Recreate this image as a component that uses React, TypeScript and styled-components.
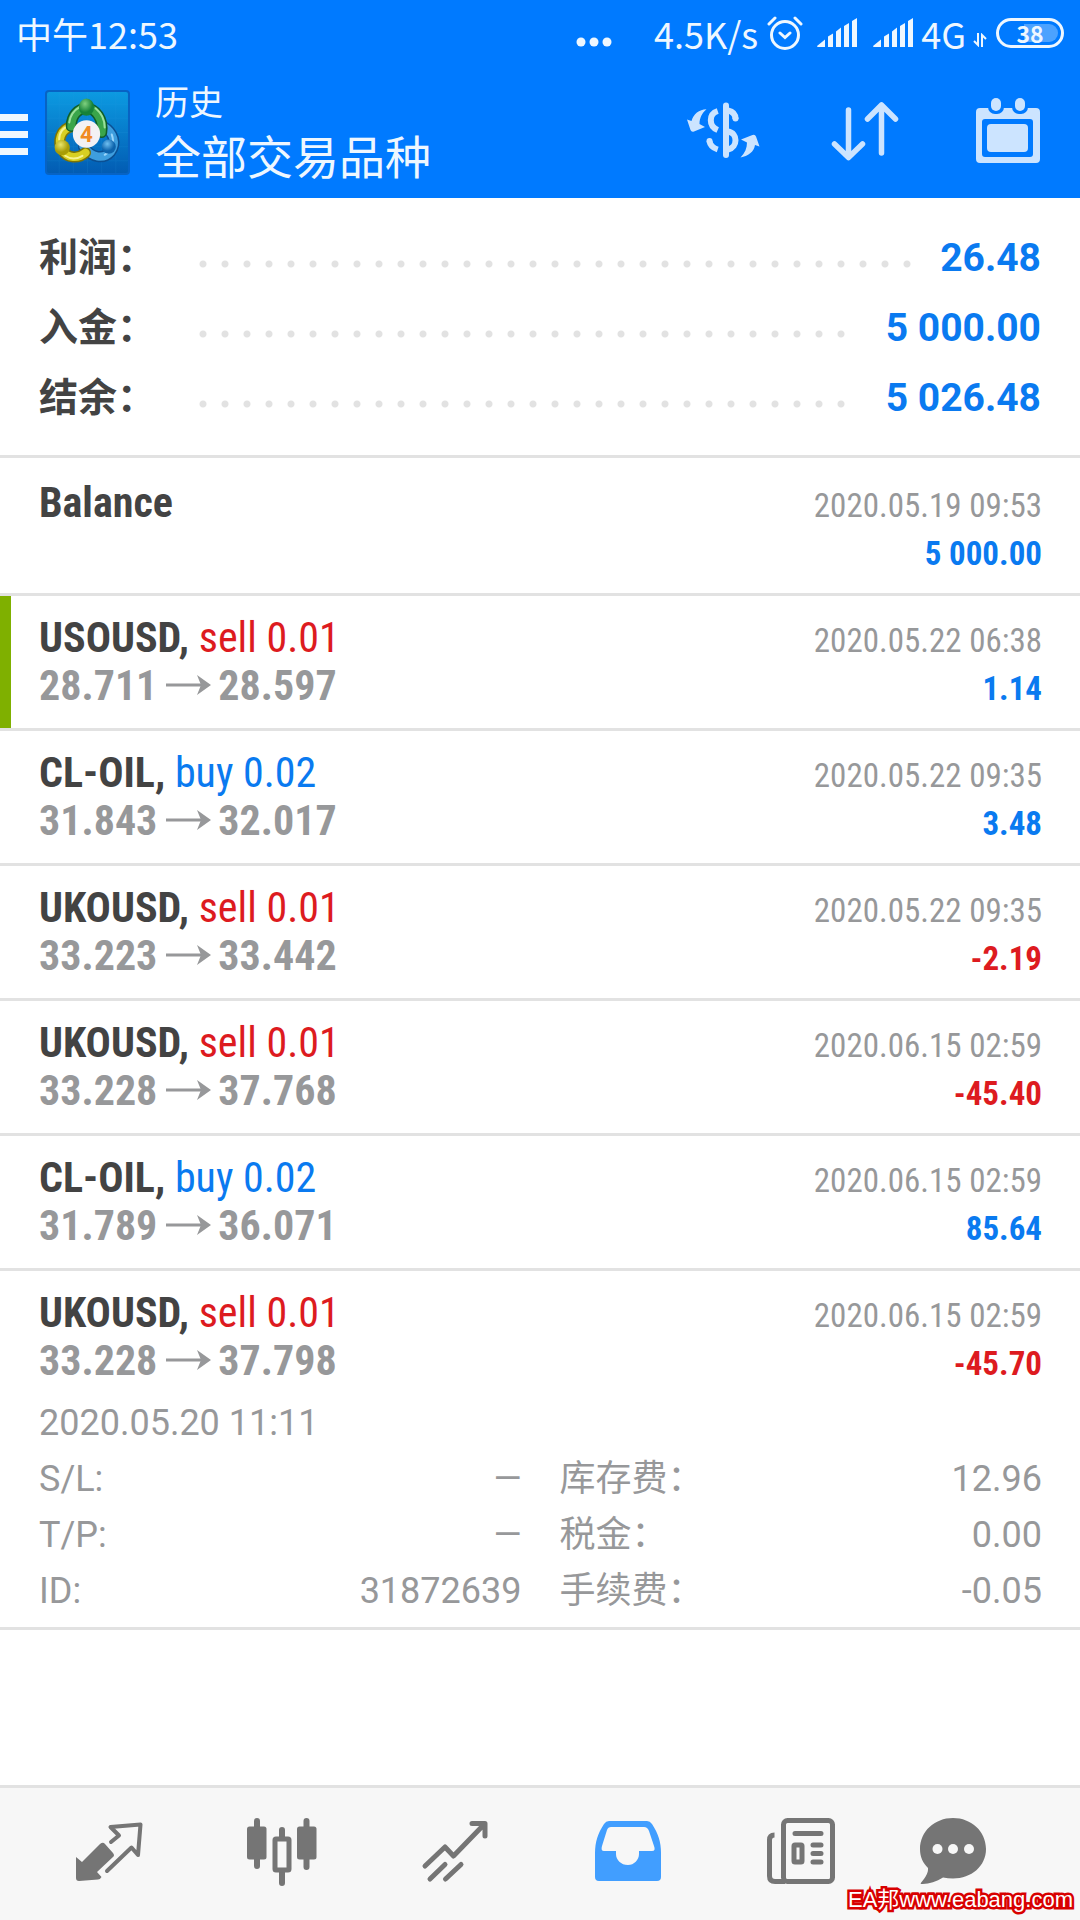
import React from 'react';
import styled, { createGlobalStyle } from 'styled-components';

const SANS = `Roboto, "Noto Sans CJK SC", sans-serif`;
const CONDENSED = `"Roboto Condensed", "Liberation Sans Narrow", Roboto, "Noto Sans CJK SC", sans-serif`;

const color = {
  brand: '#007aff',
  onBrand: '#eef7ff',
  action: '#cce4ff',
  ink: '#434343',
  muted: '#97989a',
  line: '#e2e2e2',
  buy: '#0a7af0',
  sell: '#dd1b1f',
  nav: '#757575',
  navActive: '#419eff',
  open: '#7fb000',
};

const GlobalStyle = createGlobalStyle`
  * { box-sizing: border-box; }
  body { margin: 0; background: #fff; font-family: ${SANS}; }
  button { border: 0; padding: 0; background: none; font: inherit; color: inherit; cursor: pointer; }
  svg { display: block; }
`;

const Screen = styled.div`
  position: relative;
  display: flex;
  flex-direction: column;
  min-height: 100vh;
`;

const Header = styled.header`
  background: ${color.brand};
  color: ${color.onBrand};
`;

const StatusBar = styled.div`
  display: flex;
  align-items: center;
  height: 66px;
  padding: 0 16px;
  font-family: "Noto Sans CJK SC", sans-serif;
  font-size: 36px;
  line-height: 66px;
`;

const StatusIcons = styled.div`
  display: flex;
  align-items: center;
  margin-left: auto;
`;

const Ellipsis = styled.svg`
  margin-right: 42px;
`;

const AlarmSvg = styled.svg`
  margin: 0 14px 0 9px;
`;

const Signals = styled.div`
  display: flex;
  gap: 16px;
  margin-right: 8px;
`;

const DataSvg = styled.svg`
  margin: 14px 9px 0 7px;
`;

const Battery = styled.div`
  display: flex;
  align-items: center;
  justify-content: center;
  width: 68px;
  height: 30px;
  border: 3px solid ${color.onBrand};
  border-radius: 15px;
  background: linear-gradient(90deg, transparent 40%, #4ca2ff 40%) content-box;
  padding: 3px;
  font-size: 23px;
  font-weight: 700;
  line-height: 24px;
`;

const TitleBar = styled.div`
  display: flex;
  align-items: center;
  height: 132px;
`;

const MenuButton = styled.button`
  display: flex;
  flex-direction: column;
  gap: 10px;
  width: 28px;
  margin: 4px 17px 0 0;
`;

const MenuBar = styled.span`
  height: 7px;
  background: ${color.onBrand};
`;

const Titles = styled.div`
  display: flex;
  flex-direction: column;
  gap: 5px;
  margin-left: 25px;
  padding-top: 3px;
`;

const Title = styled.h1`
  margin: 0;
  font-size: 34px;
  font-weight: 400;
  line-height: 44px;
`;

const Subtitle = styled.span`
  font-size: 46px;
  line-height: 56px;
`;

const Actions = styled.div`
  display: flex;
  margin-left: auto;
`;

const ActionButton = styled.button`
  display: flex;
  align-items: center;
  justify-content: center;
  width: 143px;
  height: 100px;
  color: ${color.action};
`;

const Summary = styled.dl`
  margin: 0;
  padding: 25px 39px 22px 39px;
  border-bottom: 3px solid ${color.line};
`;

const SummaryRow = styled.div`
  display: flex;
  align-items: baseline;
  height: 70px;
  font-size: 39px;
  font-weight: 700;
  line-height: 70px;
`;

const SummaryLabel = styled.dt`
  width: 153px;
  color: ${color.ink};
`;

const Leader = styled.span`
  flex: 1;
  align-self: center;
  height: 8px;
  margin: 12px 28px 0 0;
  background: radial-gradient(circle, ${color.line} 3px, transparent 4px) 0 0 / 22px 8px repeat-x;
`;

const SummaryValue = styled.dd`
  margin: 0;
  color: ${color.buy};
`;

const History = styled.ul`
  flex: 1;
  margin: 0;
  padding: 0;
  list-style: none;
`;

const Deal = styled.li<{ $first?: boolean; $marked?: boolean }>`
  padding: ${p => (p.$first ? 21 : 18)}px 38px 18px ${p => (p.$marked ? 28 : 39)}px;
  border-left: ${p => (p.$marked ? 11 : 0)}px solid ${color.open};
  box-shadow: 0 3px ${color.line};
  margin-bottom: 3px;
`;

const Line = styled.div`
  display: flex;
  align-items: baseline;
  justify-content: space-between;
  height: 48px;
  font-family: ${CONDENSED};
  font-size: 42px;
  line-height: 48px;
`;

const Symbol = styled.strong`
  color: ${color.ink};
  font-weight: 700;
`;

const Side = styled.span<{ $side: 'buy' | 'sell' }>`
  color: ${p => color[p.$side]};
`;

const Prices = styled.span`
  color: ${color.muted};
  font-weight: 700;
`;

const ArrowSvg = styled.svg`
  display: inline-block;
  margin: 0 7px 0 9px;
  vertical-align: 5px;
`;

const DealTime = styled.time`
  color: ${color.muted};
  font-size: 33px;
`;

const Result = styled.span<{ $loss: boolean }>`
  color: ${p => (p.$loss ? color.sell : color.buy)};
  font-size: 33px;
  font-weight: 700;
`;

const Details = styled.div`
  margin: 10px 0 -10px;
  color: ${color.muted};
  font-size: 36px;
  line-height: 56px;
`;

const DetailGrid = styled.dl`
  display: grid;
  grid-template-columns: 1fr 1fr;
  column-gap: 38px;
  margin: 0;
`;

const DetailItem = styled.div`
  display: flex;
  justify-content: space-between;
  height: 56px;
  dd { margin: 0; }
`;

const Nav = styled.nav`
  display: grid;
  grid-template-columns: repeat(5, 173fr) 132fr;
  padding: 28px 61px 32px 22px;
  border-top: 3px solid ${color.line};
  background: #f7f7f7;
`;

const NavButton = styled.button<{ $active?: boolean }>`
  display: flex;
  justify-content: center;
  color: ${p => (p.$active ? color.navActive : color.nav)};
`;

const Watermark = styled.span`
  position: absolute;
  right: 7px;
  bottom: 4px;
  color: #fff;
  font-family: "Liberation Sans", "Noto Sans CJK SC", sans-serif;
  font-size: 22px;
  line-height: 32px;
  -webkit-text-stroke: 5px #d80000;
  paint-order: stroke fill;
`;

const AppLogo = () => (
  <svg width="85" height="85" viewBox="0 0 84 84" aria-hidden="true">
    <defs>
      <linearGradient id="tile" x1="0" y1="0" x2="0" y2="1">
        <stop offset="0" stopColor="#0c9be2" />
        <stop offset="1" stopColor="#025bb2" />
      </linearGradient>
      <radialGradient id="green" cx=".4" cy=".3"><stop offset="0" stopColor="#7fd07f" /><stop offset="1" stopColor="#168238" /></radialGradient>
      <radialGradient id="yellow" cx=".4" cy=".3"><stop offset="0" stopColor="#e9e56a" /><stop offset="1" stopColor="#a89c06" /></radialGradient>
      <radialGradient id="blue" cx=".4" cy=".3"><stop offset="0" stopColor="#6fc0f2" /><stop offset="1" stopColor="#0d63ac" /></radialGradient>
    </defs>
    <rect x="1" y="1" width="82" height="82" rx="3" fill="url(#tile)" stroke="#0763c4" strokeWidth="2" />
    <path d="M14 2V82M28 2V82M42 2V82M56 2V82M70 2V82M2 14H82M2 28H82M2 42H82M2 56H82M2 70H82" stroke="#2ea8e8" strokeOpacity=".12" fill="none" />
    <g fill="none" strokeLinecap="round">
      <path d="M58 36C68 42 71 53 65 61C58 69 46 67 38 56" stroke="#0b4f92" strokeWidth="11" />
      <path d="M58 36C68 42 71 53 65 61C58 69 46 67 38 56" stroke="#3e9ede" strokeWidth="8" />
      <path d="M66 44C69 52 66 60 59 64" stroke="#9ad5fa" strokeWidth="2" />
      <path d="M27 36C15 38 12 51 17 59C22 68 33 68 40 62" stroke="#7d7406" strokeWidth="11" />
      <path d="M27 36C15 38 12 51 17 59C22 68 33 68 40 62" stroke="#d8cf22" strokeWidth="8" />
      <path d="M25 35C17 37 14 43 14 49M20 65C26 69 32 68 37 65" stroke="#f6f292" strokeWidth="2" />
      <path d="M26 36C26 25 33 18 41 18C50 18 58 29 56 42" stroke="#115e28" strokeWidth="11" />
      <path d="M26 36C26 25 33 18 41 18C50 18 58 29 56 42" stroke="#3aa54a" strokeWidth="8" />
      <path d="M24 32C25 24 29 20 34 17M50 18C56 23 59 30 59 37" stroke="#9be09b" strokeWidth="2" />
    </g>
    <ellipse cx="41" cy="17" rx="7.5" ry="8.5" fill="url(#green)" />
    <circle cx="17" cy="57" r="7.5" fill="url(#yellow)" />
    <circle cx="63" cy="56" r="7" fill="url(#blue)" />
    <circle cx="41" cy="43.500" r="13.500" fill="#f3f1f4" />
    <text x="41" y="51" textAnchor="middle" fontFamily="Roboto, sans-serif" fontSize="22" fontWeight="700" fill="#f08a24">4</text>
  </svg>
);

const Signal = () => (
  <svg width="40" height="30" viewBox="0 0 40 30" fill="currentColor" aria-hidden="true">
    <path d="M0 28L8 21.500V29H1Q0 29 0 28ZM11 18.500L16 15.500V29H11ZM19 13.500L24 9.500V29H19ZM27 8L32 5V29H27ZM35 3L40 0V29H35Z" />
  </svg>
);

const Alarm = () => (
  <AlarmSvg width="36" height="36" viewBox="0 0 36 36" fill="none" stroke="currentColor" strokeWidth="3" strokeLinecap="round" aria-hidden="true">
    <circle cx="18" cy="20" r="13.500" />
    <path d="M13 18L18 22.500L23 18M2 9L8 3M34 9L28 3" />
  </AlarmSvg>
);

const CurrencyIcon = () => (
  <svg width="90" height="80" viewBox="-3 2 90 80" aria-hidden="true">
    <path d="M45 15.500V65" stroke="currentColor" strokeWidth="6" strokeLinecap="round" />
    <path d="M36.700 21C27.500 24 27.500 36 36.700 40M36.700 59.500C32 58 29 55 28.500 51M47 20.500C52 21.500 54.500 24 54.500 29M47 41.500C57 43 57 57 47 59.500" fill="none" stroke="currentColor" strokeWidth="6" />
    <circle cx="28.500" cy="51" r="3" fill="currentColor" />
    <circle cx="54.500" cy="28.500" r="3" fill="currentColor" />
    <path d="M25.500 19.300C18 19.500 12.500 24 10.500 31L6 29.500L9.500 40Q10.500 42.500 13 41.500L24 37L18.500 34C18.500 28 21 23 25.500 19.300ZM59.500 67.500C67 66 73 62 74 55L78.500 56.500L75 46.500Q74 44 71.500 45L60 49.500L66 52.500C66 58 64 63 59.500 67.500Z" fill="currentColor" />
  </svg>
);

const SortIcon = () => (
  <svg width="70" height="64" viewBox="1 1 70 64" fill="none" stroke="currentColor" strokeWidth="5.500" strokeLinecap="round" strokeLinejoin="round" aria-hidden="true">
    <path d="M18.500 11V58M4.500 45L18.500 58.500L32.500 45M51.500 54V6M37.500 20L51.500 6L65.500 20" />
  </svg>
);

const CalendarIcon = () => (
  <svg width="66" height="70" viewBox="1 2 66 70" aria-hidden="true">
    <path fill="currentColor" fillRule="evenodd" d="M5 13H61Q65 13 65 17V64Q65 68 61 68H5Q1 68 1 64V17Q1 13 5 13ZM10 24Q7 24 7 27V59Q7 62 10 62H55Q58 62 58 59V27Q58 24 55 24Z" />
    <rect x="12" y="29" width="41" height="28" rx="4" fill="currentColor" />
    <rect x="13" y="0" width="16" height="19" rx="7" fill={color.brand} />
    <rect x="37" y="0" width="16" height="19" rx="7" fill={color.brand} />
    <rect x="16" y="3" width="10" height="13" rx="5" fill="currentColor" />
    <rect x="40" y="3" width="10" height="13" rx="5" fill="currentColor" />
  </svg>
);

const QuotesIcon = () => (
  <svg width="72" height="72" viewBox="0 0 72 72" aria-hidden="true">
    <path d="M3 31L9 36L27 18Q30 15.500 32 18L40 27Q42 29.500 40 31L24 46L28.500 51Q27 53.500 25 53.500L6 55Q3 55 3 52Z" transform="translate(0 10)" fill="currentColor" />
    <path d="M38 31L46 24.500L37.500 16L67.500 13.500L65 44L58.500 36.500L34 60" transform="translate(0 -5)" fill="none" stroke="currentColor" strokeWidth="4" strokeLinejoin="round" strokeLinecap="round" />
  </svg>
);

const ChartsIcon = () => (
  <svg width="72" height="72" viewBox="0 0 72 72" aria-hidden="true">
    <path d="M11 5V50M60.500 5V51M36 14V67" stroke="currentColor" strokeWidth="6" strokeLinecap="round" />
    <rect x="1" y="10.500" width="19.500" height="33" rx="2.500" fill="currentColor" />
    <rect x="51" y="10.500" width="19.500" height="33" rx="2.500" fill="currentColor" />
    <rect x="29" y="23" width="14" height="31" rx="1" fill="#f7f7f7" stroke="currentColor" strokeWidth="5" />
  </svg>
);

const TradeIcon = () => (
  <svg width="72" height="72" viewBox="0 0 72 72" fill="none" stroke="currentColor" strokeWidth="5" strokeLinecap="round" strokeLinejoin="round" aria-hidden="true">
    <path d="M6 50L26 31L34.500 40L65.500 8M53 7.500H66V20M11 63L26 48.500M26.500 63L42 48.500" />
  </svg>
);

const HistoryIcon = () => (
  <svg width="72" height="72" viewBox="0 0 72 72" aria-hidden="true">
    <path fill="currentColor" fillRule="evenodd" d="M17 5H55Q58 5 60 8C66 17 69 26 69 37V61Q69 65 65 65H7Q3 65 3 61V37C3 26 6 17 12 8Q14 5 17 5ZM19 11Q16 11 15 14L10 30Q8.500 35 12 35H24V38C24 44 29 49 36 49C42 49 47 44 47 38V35H60Q64 35 62 30L57 15Q55.500 11 52 11Z" />
  </svg>
);

const NewsIcon = () => (
  <svg width="72" height="72" viewBox="0 0 72 72" fill="none" stroke="currentColor" strokeWidth="5" strokeLinecap="round" aria-hidden="true">
    <rect x="18.500" y="4.500" width="49" height="61" rx="4" />
    <path d="M9.500 19Q4.500 19 4.500 24V60Q4.500 65.500 10 65.500H20" strokeLinecap="butt" />
    <path d="M30 17.500H56M48 29H56M48 37.500H56M48 46H56" />
    <rect x="29" y="29" width="8" height="17" rx="1" />
  </svg>
);

const ChatIcon = () => (
  <svg width="72" height="72" viewBox="0 0 72 72" aria-hidden="true">
    <path fill="currentColor" d="M36 2C54.500 2 69 15.500 69 33C69 50 54.500 62.500 36 62.500Q31 62.500 26 61.500C19 66 11 68.500 4 68Q3 67.500 5 65.500C9 61 11.500 56 11 52C6 47 3 41 3 33C3 15.500 17.500 2 36 2Z" />
    <circle cx="20.500" cy="33" r="5" fill="#f7f7f7" /><circle cx="36" cy="33" r="5" fill="#f7f7f7" /><circle cx="52" cy="33" r="5" fill="#f7f7f7" />
  </svg>
);

const PriceArrow = () => (
  <ArrowSvg width="45" height="20" viewBox="0 0 45 20" role="img" aria-label="to">
    <path d="M0 10H38" stroke="currentColor" strokeWidth="3" />
    <path d="M31 0L45 10L31 20L35 10Z" fill="currentColor" />
  </ArrowSvg>
);

const summary = [
  { label: '利润', value: '26.48' },
  { label: '入金', value: '5 000.00' },
  { label: '结余', value: '5 026.48' },
];

type Trade = {
  symbol: string;
  side: 'buy' | 'sell';
  volume: string;
  from: string;
  to: string;
  time: string;
  result: string;
};

const trades: Trade[] = [
  { symbol: 'USOUSD', side: 'sell', volume: '0.01', from: '28.711', to: '28.597', time: '2020.05.22 06:38', result: '1.14' },
  { symbol: 'CL-OIL', side: 'buy', volume: '0.02', from: '31.843', to: '32.017', time: '2020.05.22 09:35', result: '3.48' },
  { symbol: 'UKOUSD', side: 'sell', volume: '0.01', from: '33.223', to: '33.442', time: '2020.05.22 09:35', result: '-2.19' },
  { symbol: 'UKOUSD', side: 'sell', volume: '0.01', from: '33.228', to: '37.768', time: '2020.06.15 02:59', result: '-45.40' },
  { symbol: 'CL-OIL', side: 'buy', volume: '0.02', from: '31.789', to: '36.071', time: '2020.06.15 02:59', result: '85.64' },
  { symbol: 'UKOUSD', side: 'sell', volume: '0.01', from: '33.228', to: '37.798', time: '2020.06.15 02:59', result: '-45.70' },
];

const details = [
  ['S/L:', '—'],
  ['库存费：', '12.96'],
  ['T/P:', '—'],
  ['税金：', '0.00'],
  ['ID:', '31872639'],
  ['手续费：', '-0.05'],
];

const tabs = [
  { name: '行情', Icon: QuotesIcon },
  { name: '图表', Icon: ChartsIcon },
  { name: '交易', Icon: TradeIcon },
  { name: '历史', Icon: HistoryIcon },
  { name: '新闻', Icon: NewsIcon },
  { name: '消息', Icon: ChatIcon },
];

export default function App() {
  return (
    <Screen>
      <GlobalStyle />
      <Header>
        <StatusBar>
          <span>中午12:53</span>
          <StatusIcons>
            <Ellipsis width="36" height="30" viewBox="0 0 36 30" fill="currentColor" aria-hidden="true">
              <circle cx="5" cy="24" r="4.500" /><circle cx="18" cy="24" r="4.500" /><circle cx="31" cy="24" r="4.500" />
            </Ellipsis>
            <span>4.5K/s</span>
            <Alarm />
            <Signals><Signal /><Signal /></Signals>
            <span>4G</span>
            <DataSvg width="14" height="14" viewBox="0 0 14 14" fill="none" stroke="currentColor" strokeWidth="2" aria-hidden="true">
              <path d="M5 0V12L1 8M9 14V2L13 6" />
            </DataSvg>
            <Battery>38</Battery>
          </StatusIcons>
        </StatusBar>
        <TitleBar>
          <MenuButton aria-label="菜单"><MenuBar /><MenuBar /><MenuBar /></MenuButton>
          <AppLogo />
          <Titles>
            <Title>历史</Title>
            <Subtitle>全部交易品种</Subtitle>
          </Titles>
          <Actions>
            <ActionButton aria-label="交易品种"><CurrencyIcon /></ActionButton>
            <ActionButton aria-label="排序"><SortIcon /></ActionButton>
            <ActionButton aria-label="日期"><CalendarIcon /></ActionButton>
          </Actions>
        </TitleBar>
      </Header>

      <Summary>
        {summary.map(s => (
          <SummaryRow key={s.label}>
            <SummaryLabel>{s.label}：</SummaryLabel>
            <Leader />
            <SummaryValue>{s.value}</SummaryValue>
          </SummaryRow>
        ))}
      </Summary>

      <History>
        <Deal $first>
          <Line><Symbol>Balance</Symbol><DealTime>2020.05.19 09:53</DealTime></Line>
          <Line><Prices>&nbsp;</Prices><Result $loss={false}>5 000.00</Result></Line>
        </Deal>
        {trades.map((t, i) => (
          <Deal key={i} $marked={i === 0}>
            <Line>
              <span><Symbol>{t.symbol},</Symbol> <Side $side={t.side}>{t.side} {t.volume}</Side></span>
              <DealTime>{t.time}</DealTime>
            </Line>
            <Line>
              <Prices>{t.from}<PriceArrow />{t.to}</Prices>
              <Result $loss={t.result.startsWith('-')}>{t.result}</Result>
            </Line>
            {i === trades.length - 1 && (
              <Details>
                <time>2020.05.20 11:11</time>
                <DetailGrid>
                  {details.map(([name, value]) => (
                    <DetailItem key={name}><dt>{name}</dt><dd>{value}</dd></DetailItem>
                  ))}
                </DetailGrid>
              </Details>
            )}
          </Deal>
        ))}
      </History>

      <Nav>
        {tabs.map(({ name, Icon }, i) => (
          <NavButton key={name} aria-label={name} $active={i === 3}><Icon /></NavButton>
        ))}
      </Nav>
      <Watermark>EA邦www.eabang.com</Watermark>
    </Screen>
  );
}
